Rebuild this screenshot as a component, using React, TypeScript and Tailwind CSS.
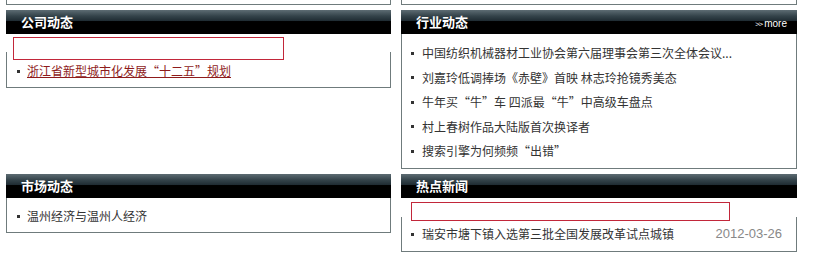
const industry = [
  "中国纺织机械器材工业协会第六届理事会第三次全体会议...",
  "刘嘉玲低调捧场《赤壁》首映 林志玲抢镜秀美态",
  "牛年买“牛”车 四派最“牛”中高级车盘点",
  "村上春树作品大陆版首次换译者",
  "搜索引擎为何频频“出错”",
];

function Header({ title, more }: { title: string; more?: boolean }) {
  return (
    <div className="flex h-[24px] items-center justify-between bg-[linear-gradient(to_bottom,#5d6c73_0%,#34434a_25%,#1f2c33_45%,#000_48%,#000_100%)] pl-[15px] pr-[10px]">
      <span className="text-[13px] font-bold text-white">{title}</span>
      {more && (
        <span className="mt-[3px] flex items-center text-white">
          <span className="text-[8px] tracking-[-1px]">&gt;&gt;</span>
          <span className="ml-[2px] font-['Liberation_Sans',sans-serif] text-[10px]">more</span>
        </span>
      )}
    </div>
  );
}

function Bullet() {
  return <span className="h-[3px] w-[3px] shrink-0 bg-[#333]" />;
}

export default function App() {
  return (
    <div className="h-[260px] w-[820px] bg-white pl-[6px] font-['Noto_Sans_CJK_SC','Noto_Sans',sans-serif] text-[12px] text-[#333]">
      <div className="flex items-start gap-[10px]">
        <div className="h-[5px] w-[385px] border-x border-b border-[#6f7b7c]" />
        <div className="h-[5px] w-[396px] border-x border-b border-[#6f7b7c]" />
      </div>

      <div className="mt-[5px] flex items-start gap-[10px]">
        {/* 公司动态 */}
        <div className="w-[385px]">
          <Header title="公司动态" />
          <div className="relative z-10 ml-[7px] mt-[3px] h-[23px] w-[271px] border border-[#c2273a]" />
          <div className="-mt-[8px] border-x border-b border-[#6f7b7c] pb-[6px] pl-[10px] pt-[9px]">
            <div className="flex h-[20px] items-center gap-[7px]">
              <Bullet />
              <a href="#" className="text-[#8e1b1b] underline">
                浙江省新型城市化发展“十二五”规划
              </a>
            </div>
          </div>
        </div>

        {/* 行业动态 */}
        <div className="w-[396px]">
          <Header title="行业动态" more />
          <div className="border-x border-b border-[#6f7b7c] pb-[4.5px] pl-[9px] pt-[7px]">
            {industry.map((t) => (
              <div key={t} className="flex h-[24.5px] items-center gap-[8px]">
                <Bullet />
                <span>{t}</span>
              </div>
            ))}
          </div>
        </div>
      </div>

      <div className="mt-[5px] flex items-start gap-[10px]">
        {/* 市场动态 */}
        <div className="w-[385px]">
          <Header title="市场动态" />
          <div className="border-x border-b border-[#6f7b7c] pb-[6px] pl-[10px] pt-[8px]">
            <div className="flex h-[20px] items-center gap-[7px]">
              <Bullet />
              <span>温州经济与温州人经济</span>
            </div>
          </div>
        </div>

        {/* 热点新闻 */}
        <div className="w-[396px]">
          <Header title="热点新闻" />
          <div className="relative z-10 ml-[10px] mt-[4px] h-[19px] w-[319px] border border-[#c2273a]" />
          <div className="-mt-[4px] border-x border-b border-[#6f7b7c] pb-[7px] pl-[9px] pr-[14px] pt-[7px]">
            <div className="flex h-[20px] items-center gap-[8px]">
              <Bullet />
              <span className="flex-1">瑞安市塘下镇入选第三批全国发展改革试点城镇</span>
              <span className="font-['Liberation_Sans',sans-serif] text-[13px] text-[#888]">2012-03-26</span>
            </div>
          </div>
        </div>
      </div>
    </div>
  );
}
